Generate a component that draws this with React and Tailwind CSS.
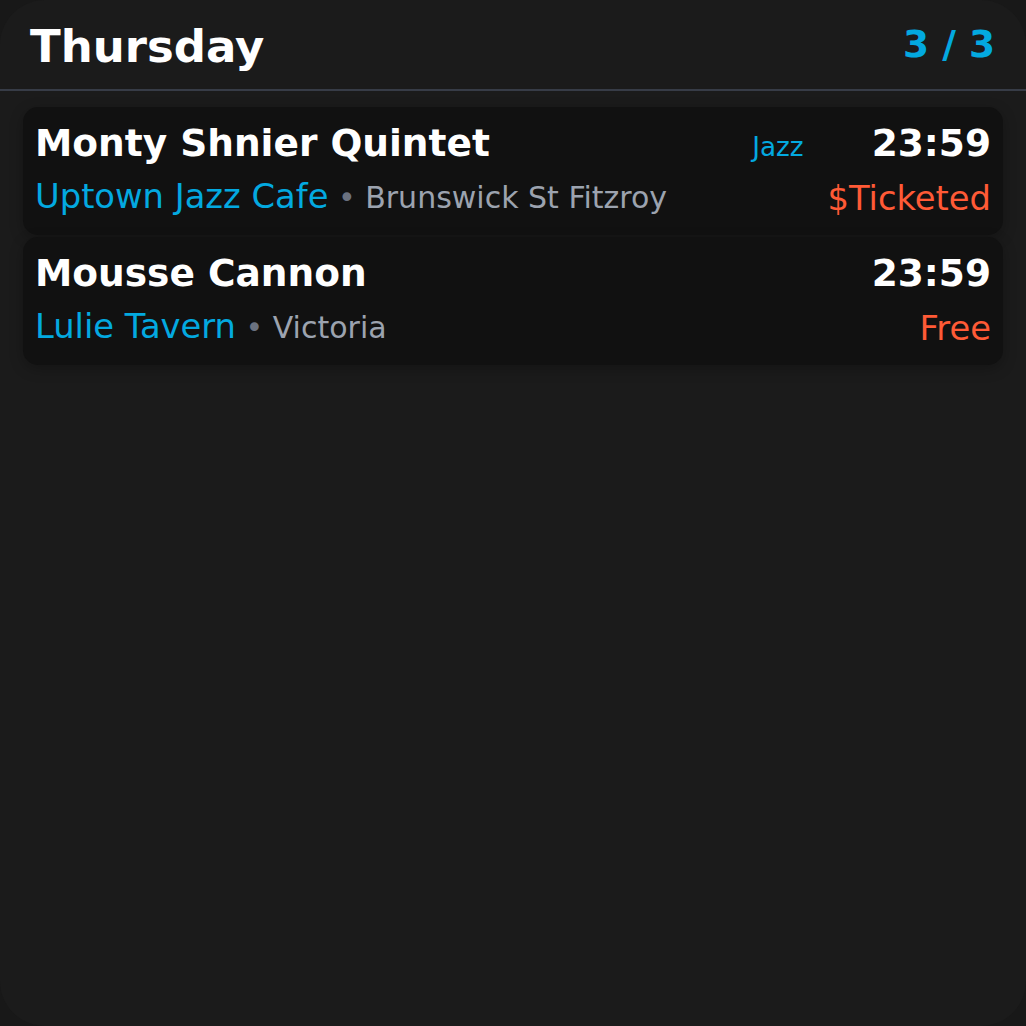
import React from 'react'

const gigs = [
    {
        name: 'Monty Shnier Quintet',
        genre: 'Jazz',
        time: '23:59',
        venue: 'Uptown Jazz Cafe',
        suburb: 'Brunswick St Fitzroy',
        price: '$Ticketed',
    },
    {
        name: 'Mousse Cannon',
        genre: null,
        time: '23:59',
        venue: 'Lulie Tavern',
        suburb: 'Victoria',
        price: 'Free',
    },
]

const font = { fontFamily: '"DejaVu Sans", Verdana, sans-serif' }

const GigCard = ({ gig }) => {
    return (
        <div className='bg-[#111111] rounded-[15px] px-[12px] pt-[14px] pb-[16px] shadow-[0_4px_14px_rgba(0,0,0,0.25)]'>
            <div className='flex items-baseline justify-between h-[44px]'>
                <h2 className='text-[37.5px] leading-[44px] font-bold text-white truncate'>{gig.name}</h2>
                <div className='flex items-baseline shrink-0'>
                    {gig.genre && (
                        <span className='text-[26.25px] leading-[44px] text-[#03a9e0] mr-[68px]'>{gig.genre}</span>
                    )}
                    <span className='text-[37.5px] leading-[44px] font-bold text-white'>{gig.time}</span>
                </div>
            </div>
            <div className='flex items-baseline justify-between mt-[10px] h-[44px]'>
                <div className='flex items-baseline min-w-0'>
                    <span className='text-[33.75px] leading-[44px] text-[#03a9e0] whitespace-nowrap'>{gig.venue}</span>
                    <span className='text-[30px] leading-[44px] text-[#6b7280] whitespace-pre'> • </span>
                    <span className='text-[30px] leading-[44px] text-[#9ca3af] whitespace-nowrap'>{gig.suburb}</span>
                </div>
                <span className='text-[33.75px] leading-[44px] text-[#ff5a36] shrink-0 translate-y-[2px]'>{gig.price}</span>
            </div>
        </div>
    )
}

const App = () => {
    return (
        <div className='w-full min-h-screen bg-[#181818]' style={font}>
            <div className='w-[1026px] h-[1026px] bg-[#1b1b1b] rounded-[45px] overflow-hidden flex flex-col'>
                {/* day header */}
                <div className='flex justify-between items-start h-[89px] pl-[30px] pr-[31px]'>
                    <h1 className='mt-[21px] text-[45px] leading-[52px] font-bold text-white'>Thursday</h1>
                    <span className='mt-[22px] text-[37.5px] leading-[44px] font-bold text-[#03a9e0]'>3 / 3</span>
                </div>
                <div className='h-[2px] bg-[#373c47]'></div>

                <div className='flex flex-col gap-[2px] px-[23px] pt-[16px]'>
                    {gigs.map((gig) => (
                        <GigCard key={gig.name} gig={gig} />
                    ))}
                </div>
            </div>
        </div>
    )
}

export default App
